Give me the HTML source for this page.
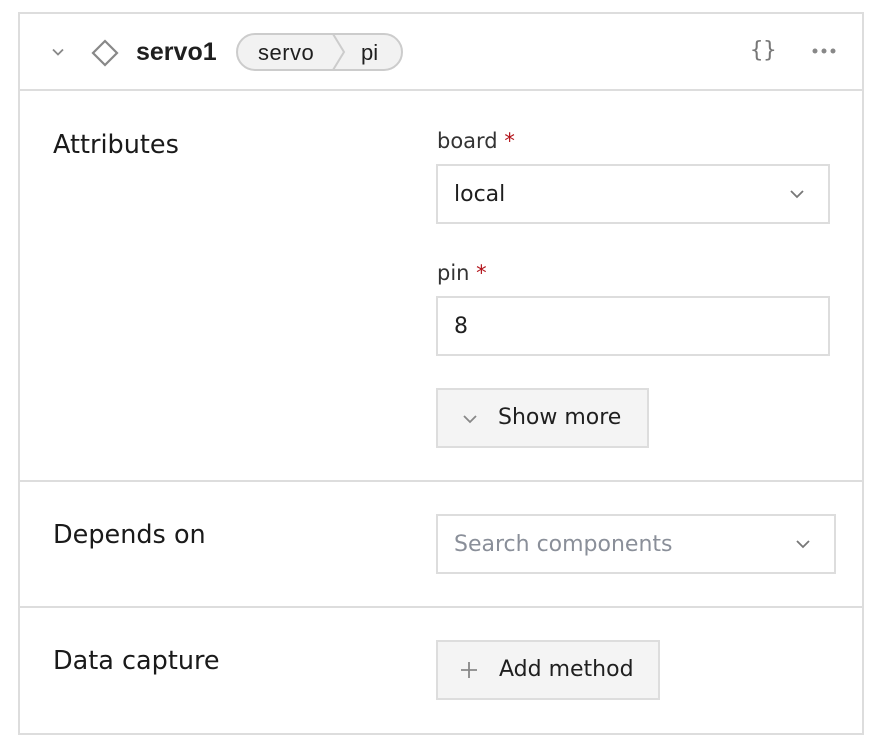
<!DOCTYPE html>
<html><head><style>
*{box-sizing:border-box;margin:0;padding:0}
body{width:880px;height:752px;background:#fff;font-family:"DejaVu Sans","Liberation Sans",sans-serif;color:#1f1f1f;position:relative;overflow:hidden}
.a{position:absolute}
.card{left:18px;top:12px;width:846px;height:723px;border:2px solid #ddd}
.hl{left:18px;width:846px;height:2px;background:#ddd}
.t{position:absolute;white-space:nowrap;line-height:1}
.box{position:absolute;border:2px solid #ddd;background:#fff}
.btn{position:absolute;border:2px solid #ddd;background:#f4f4f4}
.h{font-size:25.5px;color:#1a1a1a}
.lbl{font-size:21px;color:#333}
.val{font-size:22px}
.req{color:#b3141b}
</style></head><body>
<div class="a card"></div>
<div class="a hl" style="top:89px"></div>
<div class="a hl" style="top:480px"></div>
<div class="a hl" style="top:606px"></div>

<svg class="a" style="left:51px;top:47px" width="14" height="10" viewBox="0 0 14 10"><path d="M2 2.5l5 5 5-5" fill="none" stroke="#888" stroke-width="1.8"/></svg>
<svg class="a" style="left:90px;top:38px" width="30" height="30" viewBox="0 0 30 30"><path d="M15 3L27 15 15 27 3 15Z" fill="none" stroke="#888" stroke-width="2.2"/></svg>
<div class="t" style="left:136px;top:40px;font-size:25px;font-weight:bold;font-family:'Liberation Sans',sans-serif">servo1</div>
<div class="a" style="left:236px;top:33px;width:167px;height:38px;border:2px solid #ccc;border-radius:19px;background:#f2f2f2"></div>
<svg class="a" style="left:330px;top:34px" width="20" height="36" viewBox="0 0 20 36"><path d="M3 0L14 18 3 36" fill="none" stroke="#ccc" stroke-width="2"/></svg>
<div class="t" style="left:258px;top:42px;font-size:22px;letter-spacing:0.5px;font-family:'Liberation Sans',sans-serif">servo</div>
<div class="t" style="left:361px;top:42px;font-size:22px;font-family:'Liberation Sans',sans-serif">pi</div>
<div class="t" style="left:750px;top:40px;font-size:22px;color:#777;font-family:'DejaVu Sans Mono',monospace">{}</div>
<svg class="a" style="left:812px;top:47px" width="24" height="8"><circle cx="3" cy="4" r="2.5" fill="#888"/><circle cx="12" cy="4" r="2.5" fill="#888"/><circle cx="21" cy="4" r="2.5" fill="#888"/></svg>

<div class="t h" style="left:53px;top:133px">Attributes</div>
<div class="t lbl" style="left:437px;top:131px">board <span class="req">*</span></div>
<div class="box" style="left:436px;top:164px;width:394px;height:60px"></div>
<div class="t val" style="left:454px;top:184px">local</div>
<svg class="a" style="left:789px;top:189px" width="16" height="10" viewBox="0 0 16 10"><path d="M2 2l6 6 6-6" fill="none" stroke="#777" stroke-width="1.8"/></svg>

<div class="t lbl" style="left:437px;top:263px">pin <span class="req">*</span></div>
<div class="box" style="left:436px;top:296px;width:394px;height:60px"></div>
<div class="t val" style="left:454px;top:316px">8</div>

<div class="btn" style="left:436px;top:388px;width:213px;height:60px"></div>
<svg class="a" style="left:462px;top:414px" width="16" height="10" viewBox="0 0 16 10"><path d="M2 2l6 6 6-6" fill="none" stroke="#888" stroke-width="1.8"/></svg>
<div class="t val" style="left:498px;top:407px">Show more</div>

<div class="t h" style="left:53px;top:523px">Depends on</div>
<div class="box" style="left:436px;top:514px;width:400px;height:60px"></div>
<div class="t val" style="left:454px;top:534px;color:#8a8f99">Search components</div>
<svg class="a" style="left:795px;top:539px" width="16" height="10" viewBox="0 0 16 10"><path d="M2 2l6 6 6-6" fill="none" stroke="#777" stroke-width="1.8"/></svg>

<div class="t h" style="left:53px;top:649px">Data capture</div>
<div class="btn" style="left:436px;top:640px;width:224px;height:60px"></div>
<svg class="a" style="left:459px;top:660px" width="20" height="20" viewBox="0 0 20 20"><path d="M10 2v16M2 10h16" stroke="#888" stroke-width="1.8"/></svg>
<div class="t val" style="left:499px;top:659px">Add method</div>
</body></html>
